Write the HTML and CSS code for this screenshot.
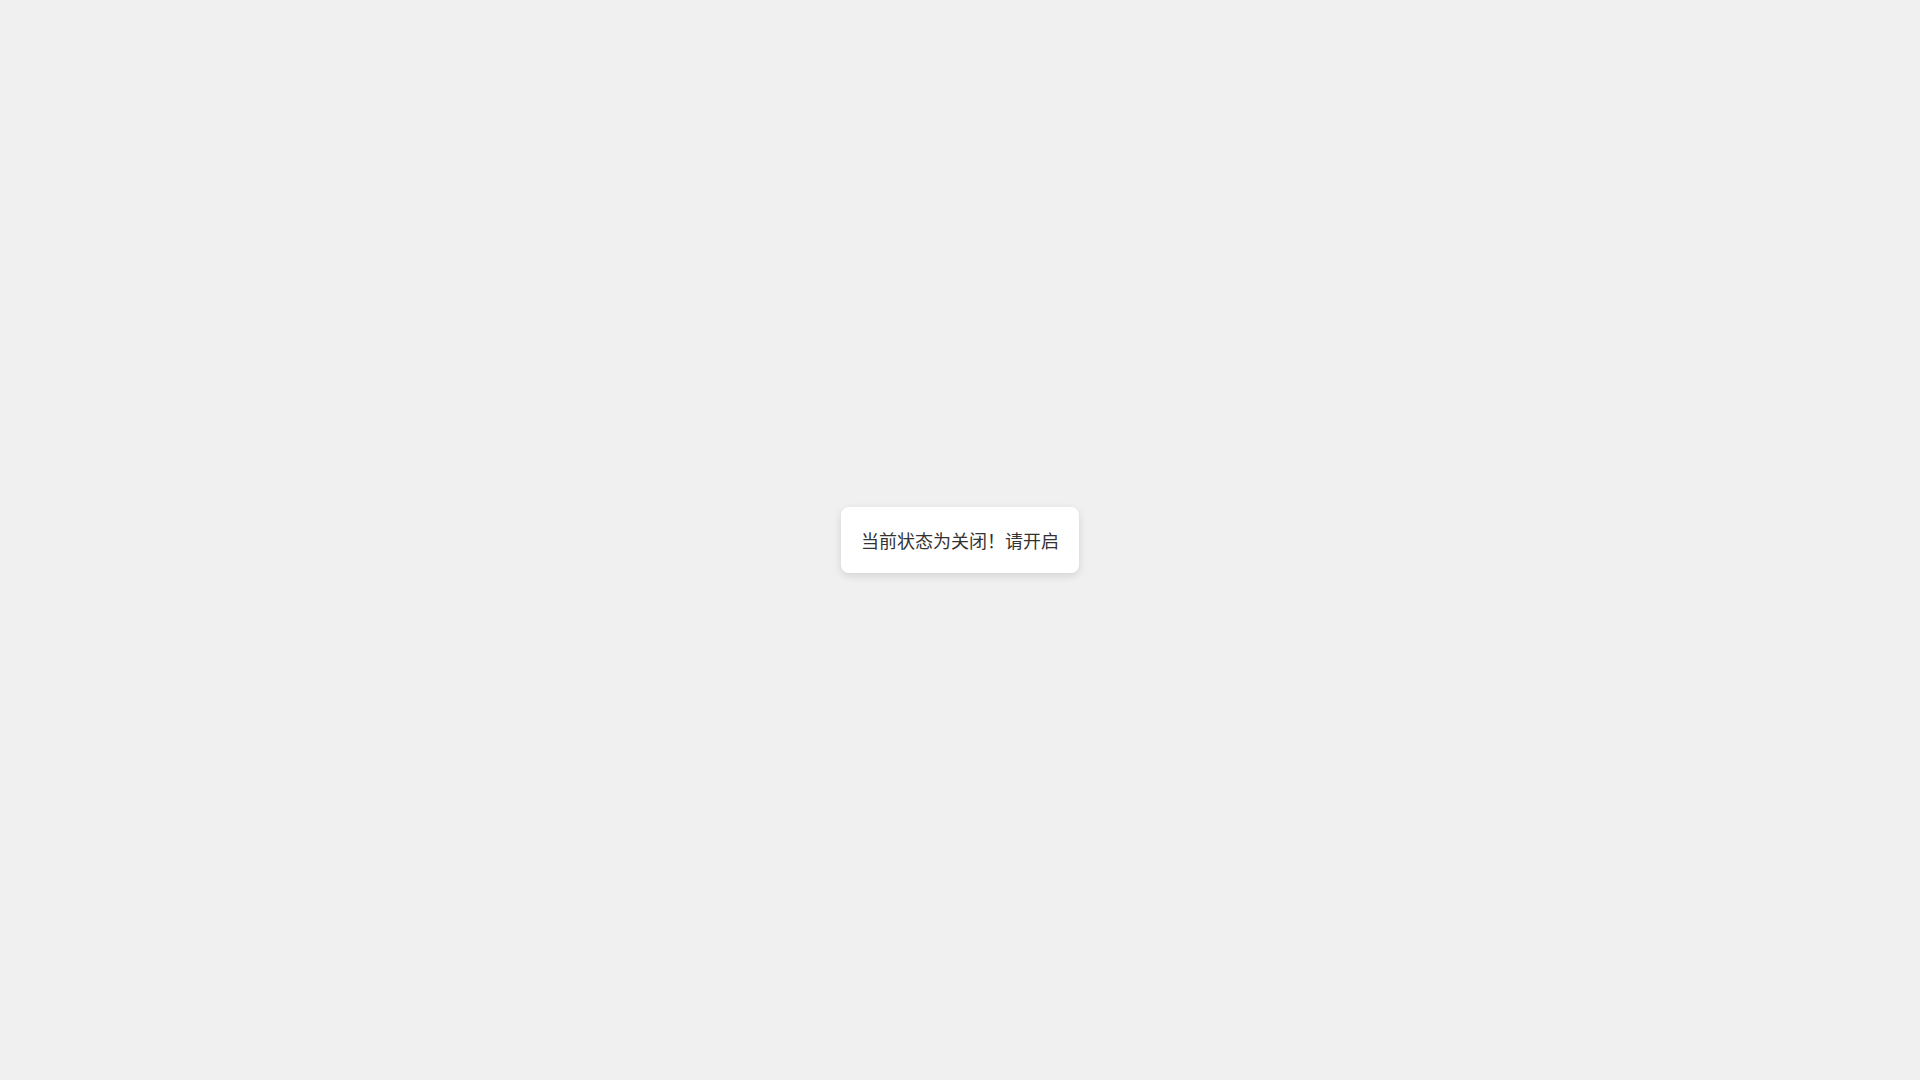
FILE: index.html
```html
<!DOCTYPE html>
<html lang="zh-CN">
<head>
<meta charset="utf-8">
<title>状态</title>
<link rel="stylesheet" href="styles.css">
</head>
<body>
<main class="stage">
  <div class="toast">当前状态为关闭！请开启</div>
</main>
</body>
</html>
```

FILE: styles.css
```css
html, body {
  margin: 0;
  padding: 0;
  height: 100%;
}
body {
  background: #f0f0f0;
  font-family: "Noto Sans CJK SC", "Noto Sans", sans-serif;
}
.stage {
  height: 100%;
  display: flex;
  align-items: center;
  justify-content: center;
}
.toast {
  background: #ffffff;
  color: #333333;
  font-size: 18px;
  line-height: 26px;
  padding: 20px 20px;
  border-radius: 8px;
  box-shadow: 0 3px 8px rgba(0, 0, 0, 0.12);
  white-space: nowrap;
}
```
